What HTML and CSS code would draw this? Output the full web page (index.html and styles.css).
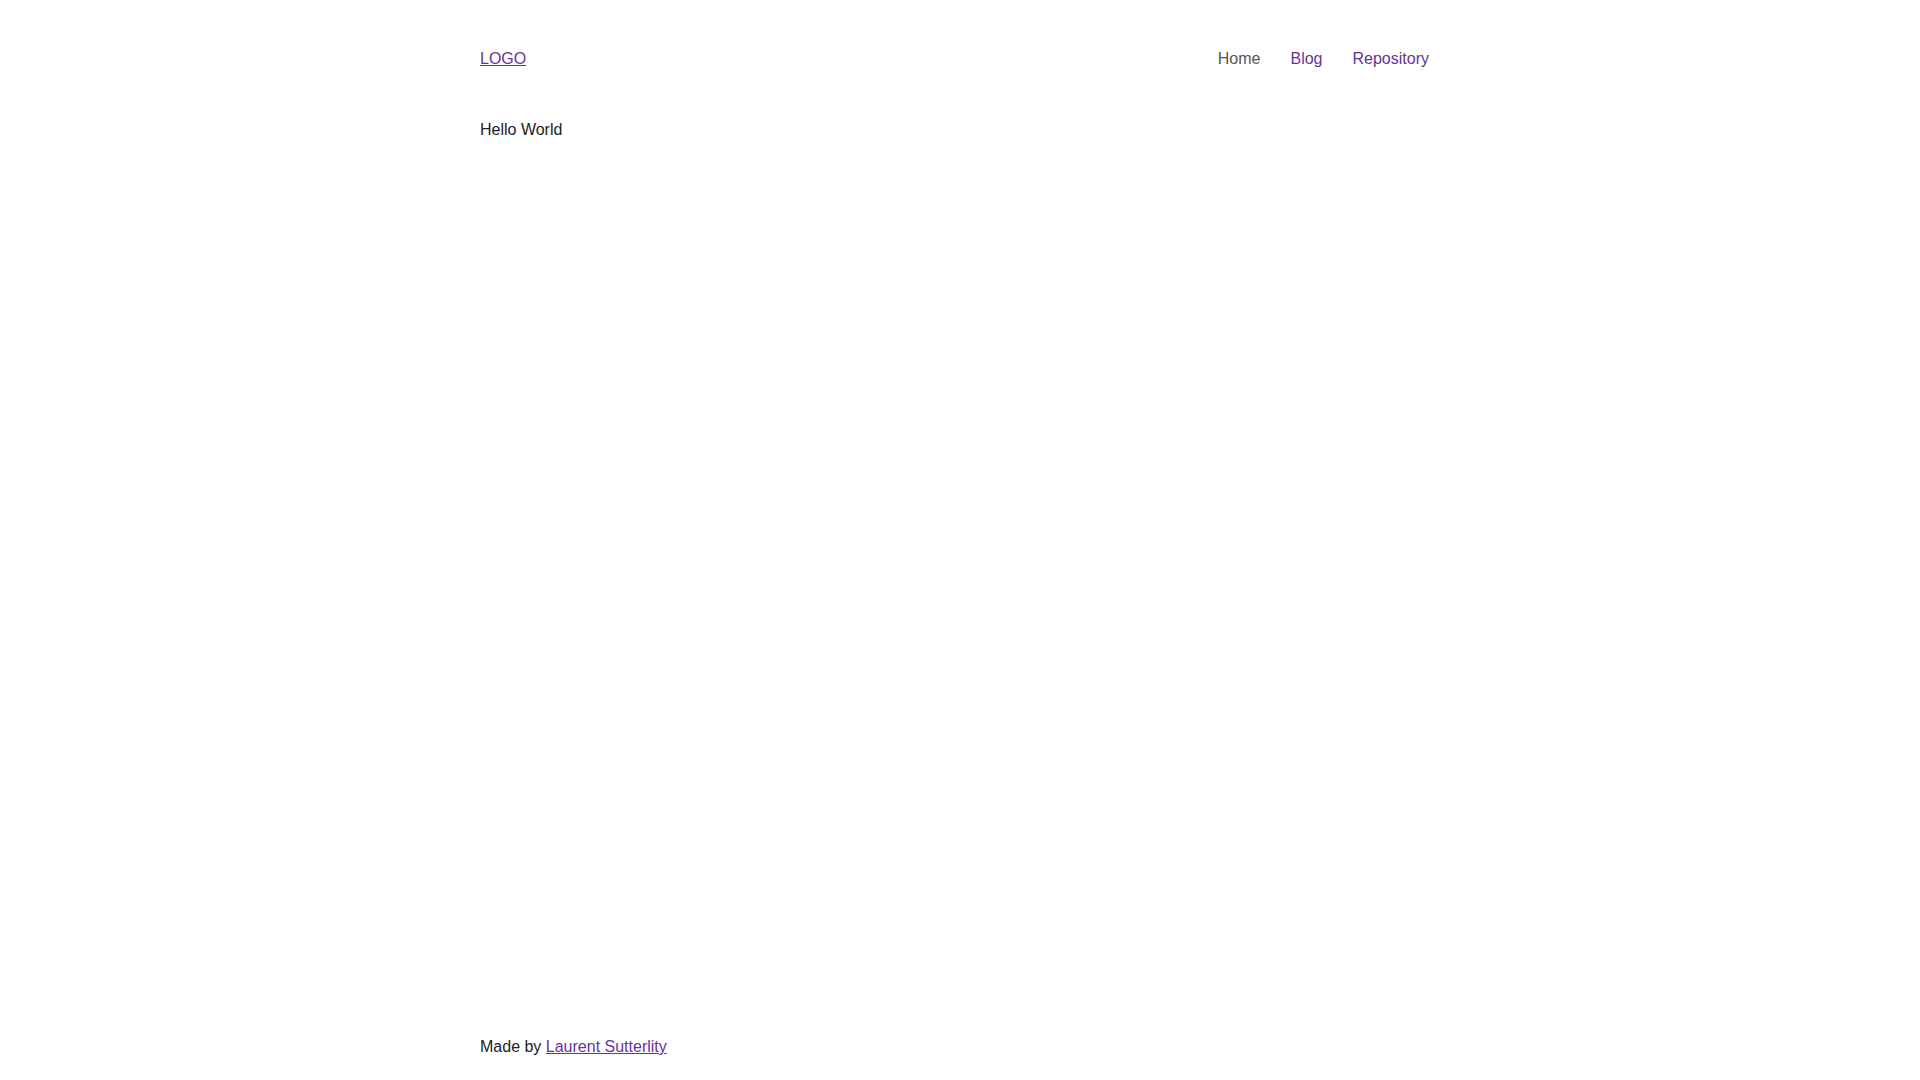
FILE: index.html
```html
<!DOCTYPE html>
<html lang="en">
<head>
<meta charset="utf-8">
<title>Hello World</title>
<link rel="stylesheet" href="styles.css">
</head>
<body>
<div class="page">
  <header class="header">
    <a class="logo" href="#">LOGO</a>
    <nav class="nav">
      <a class="nav-link nav-link--active" href="#">Home</a>
      <a class="nav-link" href="#">Blog</a>
      <a class="nav-link" href="#">Repository</a>
    </nav>
  </header>
  <main class="main">
    <p class="text">Hello World</p>
  </main>
  <footer class="footer">
    Made by <a class="footer-link" href="#">Laurent Sutterlity</a>
  </footer>
</div>
</body>
</html>
```
FILE: styles.css
```css
html, body {
  margin: 0;
  padding: 0;
  background: #ffffff;
}
body {
  font-family: "Liberation Sans", Arial, sans-serif;
  font-size: 16px;
  line-height: 24px;
  color: #222222;
}
.page {
  max-width: 960px;
  margin: 0 auto;
  min-height: 100vh;
  display: flex;
  flex-direction: column;
}
.header {
  display: flex;
  justify-content: space-between;
  align-items: center;
  padding-top: 47px;
}
.logo {
  color: #663399;
  text-decoration: underline;
}
.nav {
  display: flex;
  gap: 30px;
  padding-right: 11px;
}
.nav-link {
  color: #663399;
  text-decoration: none;
}
.nav-link--active {
  color: #555555;
}
.main {
  flex: 1;
  padding-top: 47px;
}
.text {
  margin: 0;
}
.footer {
  padding-bottom: 21px;
}
.footer-link {
  color: #663399;
  text-decoration: underline;
}
```
